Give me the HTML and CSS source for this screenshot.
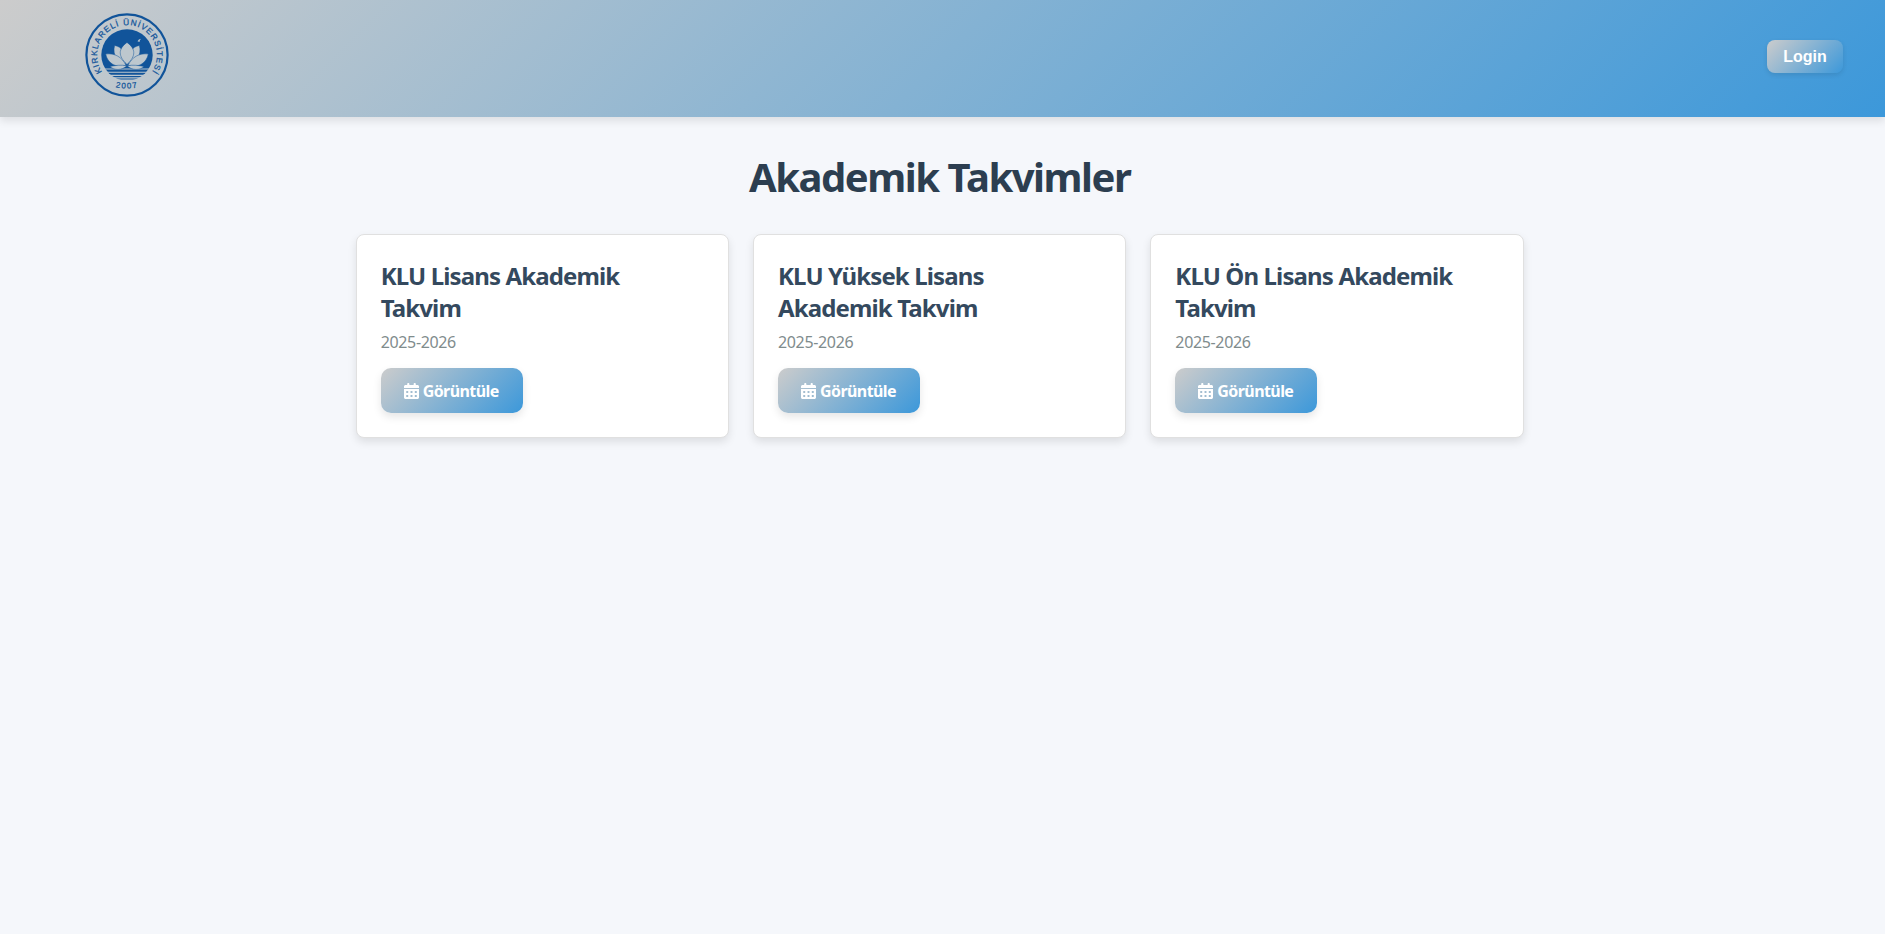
FILE: index.html
```html
<!DOCTYPE html>
<html lang="tr">
<head>
<meta charset="utf-8">
<title>Akademik Takvimler</title>
<link rel="stylesheet" href="styles.css">
</head>
<body>
<svg class="defs" aria-hidden="true">
  <symbol id="calendar" viewBox="0 0 448 512" preserveAspectRatio="none">
    <path d="M128 0c17.700 0 32 14.300 32 32V64H288V32c0-17.700 14.300-32 32-32s32 14.300 32 32V64h48c26.500 0 48 21.500 48 48v48H0V112C0 85.500 21.500 64 48 64H96V32c0-17.700 14.300-32 32-32zM0 192H448V464c0 26.500-21.500 48-48 48H48c-26.500 0-48-21.500-48-48V192zm64 80v32c0 8.800 7.200 16 16 16h32c8.800 0 16-7.200 16-16V272c0-8.800-7.200-16-16-16H80c-8.800 0-16 7.200-16 16zm128 0v32c0 8.800 7.200 16 16 16h32c8.800 0 16-7.200 16-16V272c0-8.800-7.200-16-16-16H208c-8.800 0-16 7.200-16 16zm144-16c-8.800 0-16 7.200-16 16v32c0 8.800 7.200 16 16 16h32c8.800 0 16-7.200 16-16V272c0-8.800-7.200-16-16-16H336zM64 400v32c0 8.800 7.200 16 16 16h32c8.800 0 16-7.200 16-16V400c0-8.800-7.200-16-16-16H80c-8.800 0-16 7.200-16 16zm144-16c-8.800 0-16 7.200-16 16v32c0 8.800 7.200 16 16 16h32c8.800 0 16-7.200 16-16V400c0-8.800-7.200-16-16-16H208zm112 16v32c0 8.800 7.200 16 16 16h32c8.800 0 16-7.200 16-16V400c0-8.800-7.200-16-16-16H336c-8.800 0-16 7.200-16 16z"/>
  </symbol>
</svg>
<header class="header">
  <svg class="logo" viewBox="-42 -42 84 84">
    <defs>
      <path id="ring" d="M-24.900 16.800A30 30 0 1 1 24.900 16.800"/>
      <path id="ring-year" d="M-22 28.500Q0 38.500 22 28.500"/>
      <clipPath id="disc"><circle r="25.700"/></clipPath>
    </defs>
    <circle class="logo-ring" r="40.600"/>
    <g clip-path="url(#disc)">
      <rect class="logo-fill" x="-26" y="-26" width="52" height="39.500"/>
      <path class="logo-fill" d="M-26 14.400h52v2.400h-52zM-26 17.800h52v1.900h-52zM-26 20.900h52v1.400h-52zM-26 23.500h52v1h-52z"/>
    </g>
    <path class="logo-petal" d="M-1 9.500C-9 8-15 0-12.400-9.600C-8.500-8.800-6-7-4.500-5C-5 0-3 5-1 9.500z"/>
    <path class="logo-petal" d="M1 9.500C9 8 15 0 12.400-9.600C8.500-8.800 6-7 4.500-5C5 0 3 5 1 9.500z"/>
    <path class="logo-petal" d="M0 9.500C-9 1-9-6 0-12.600C9-6 9 1 0 9.500z"/>
    <path class="logo-petal" d="M-1 10.500C-12 13-19.500 8-21.300-1C-12-2-5 2-1 10.500z"/>
    <path class="logo-petal" d="M1 10.500C12 13 19.500 8 21.300-1C12-2 5 2 1 10.500z"/>
    <path class="logo-petal" d="M0 10.800C-6 9.500-12 10.500-17 11.500C-13 15.500-5 15.500 0 10.800C5 15.500 13 15.500 17 11.500C12 10.500 6 9.500 0 10.800z"/>
    <path class="logo-star" d="M10.500-13.700l1.400-1.800 2-.8-1.100 1.700-.3 1.700z"/>
    <text class="logo-text"><textPath href="#ring" textLength="129" lengthAdjust="spacing">KIRKLARELİ ÜNİVERSİTESİ</textPath></text>
    <text class="logo-text logo-year"><textPath href="#ring-year" startOffset="50%">2007</textPath></text>
  </svg>
  <button class="login">Login</button>
</header>
<main class="page">
  <h1 class="title">Akademik Takvimler</h1>
  <div class="cards">
    <article class="card">
      <h2 class="card-title">KLU Lisans Akademik Takvim</h2>
      <p class="card-year">2025-2026</p>
      <a class="view"><svg class="icon"><use href="#calendar"/></svg><span>Görüntüle</span></a>
    </article>
    <article class="card">
      <h2 class="card-title">KLU Yüksek Lisans Akademik Takvim</h2>
      <p class="card-year">2025-2026</p>
      <a class="view"><svg class="icon"><use href="#calendar"/></svg><span>Görüntüle</span></a>
    </article>
    <article class="card">
      <h2 class="card-title">KLU Ön Lisans Akademik Takvim</h2>
      <p class="card-year">2025-2026</p>
      <a class="view"><svg class="icon"><use href="#calendar"/></svg><span>Görüntüle</span></a>
    </article>
  </div>
</main>
</body>
</html>
```
FILE: styles.css
```css
* { box-sizing: border-box; margin: 0; }
body {
  min-height: 100vh;
  background: #f5f7fb;
  font-family: "Noto Sans", "Open Sans", sans-serif;
}
.defs { display: none; }
.header {
  display: flex;
  justify-content: space-between;
  align-items: flex-start;
  height: 117px;
  padding: 13px 42px 0 85px;
  background: linear-gradient(135deg, #cccccc, #3c98da);
  box-shadow: 0 4px 8px rgba(0, 0, 0, .1);
}
.logo { width: 84px; height: 84px; }
.logo-ring { fill: none; stroke: #11549a; stroke-width: 2.200; }
.logo-fill, .logo-text { fill: #11549a; }
.logo-petal { fill: #bdc7ce; stroke: #11549a; stroke-width: .5; }
.logo-star { fill: #bdc7ce; }
.logo-text { font: 8.200px "Liberation Sans", sans-serif; stroke: #11549a; stroke-width: .25; }
.logo-year { text-anchor: middle; font-size: 8px; letter-spacing: 1.400px; }
.login {
  width: 76px;
  height: 33px;
  margin-top: 27px;
  padding: 1px 0 0;
  border: 0;
  border-radius: 8px;
  background: linear-gradient(135deg, #cccccc, #3c98da);
  box-shadow: 0 2px 5px rgba(0, 0, 0, .1);
  color: #fff;
  font: bold 16px "Liberation Sans", sans-serif;
}
.page { width: 1168px; margin: 0 0 0 355.700px; padding-top: 33px; }
.title {
  color: #2c3e50;
  font-size: 40px;
  line-height: 54px;
  letter-spacing: -1.470px;
  text-align: center;
  white-space: nowrap;
}
.cards {
  display: grid;
  grid-template-columns: repeat(3, 1fr);
  gap: 24px;
  margin-top: 30px;
}
.card {
  height: 204px;
  padding: 25px 24px 0;
  border: 1px solid #e0e0e0;
  border-radius: 8px;
  background: #fff;
  box-shadow: 0 4px 8px rgba(0, 0, 0, .1);
}
.card-title {
  width: 290px;
  color: #34495e;
  font-size: 24px;
  line-height: 32px;
  letter-spacing: -.870px;
}
.card-year {
  margin-top: 8px;
  color: #7f8c8d;
  font-size: 16px;
  line-height: 21px;
  letter-spacing: -.350px;
}
.view {
  display: inline-flex;
  align-items: center;
  gap: 4px;
  width: 142px;
  height: 45px;
  margin-top: 15px;
  padding-left: 23px;
  border-radius: 10px;
  background: linear-gradient(135deg, #cccccc, #3c98da);
  box-shadow: 0 4px 8px rgba(0, 0, 0, .1);
  color: #fff;
  font-size: 16px;
  font-weight: 700;
  line-height: 20px;
  letter-spacing: -.580px;
}
.icon { width: 15px; height: 16px; fill: #fff; }
```
